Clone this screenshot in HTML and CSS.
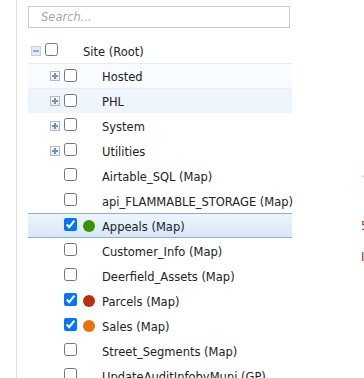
FILE: index.html
```html
<!DOCTYPE html>
<html>
<head>
<meta charset="utf-8">
<link rel="stylesheet" href="styles.css">
</head>
<body>
<div class="page">
  <div class="gutter"></div>
  <div class="panel">
    <div class="search"><input type="text" placeholder="Search..."></div>
    <div class="tree">
      <div class="row root"><span class="exp minus"></span><input type="checkbox"><span class="icon"></span><span class="label">Site (Root)</span></div>
      <div class="row lvl hover"><span class="exp plus"></span><input type="checkbox"><span class="icon"></span><span class="label">Hosted</span></div>
      <div class="row lvl alt"><span class="exp plus"></span><input type="checkbox"><span class="icon"></span><span class="label">PHL</span></div>
      <div class="row lvl"><span class="exp plus"></span><input type="checkbox"><span class="icon"></span><span class="label">System</span></div>
      <div class="row lvl"><span class="exp plus"></span><input type="checkbox"><span class="icon"></span><span class="label">Utilities</span></div>
      <div class="row lvl"><span class="exp none"></span><input type="checkbox"><span class="icon"></span><span class="label">Airtable_SQL (Map)</span></div>
      <div class="row lvl"><span class="exp none"></span><input type="checkbox"><span class="icon"></span><span class="label">api_FLAMMABLE_STORAGE (Map)</span></div>
      <div class="row lvl selected"><span class="exp none"></span><input type="checkbox" checked><span class="icon"><span class="dot green"></span></span><span class="label">Appeals (Map)</span></div>
      <div class="row lvl"><span class="exp none"></span><input type="checkbox"><span class="icon"></span><span class="label">Customer_Info (Map)</span></div>
      <div class="row lvl"><span class="exp none"></span><input type="checkbox"><span class="icon"></span><span class="label">Deerfield_Assets (Map)</span></div>
      <div class="row lvl"><span class="exp none"></span><input type="checkbox" checked><span class="icon"><span class="dot red"></span></span><span class="label">Parcels (Map)</span></div>
      <div class="row lvl"><span class="exp none"></span><input type="checkbox" checked><span class="icon"><span class="dot orange"></span></span><span class="label">Sales (Map)</span></div>
      <div class="row lvl"><span class="exp none"></span><input type="checkbox"><span class="icon"></span><span class="label">Street_Segments (Map)</span></div>
      <div class="row lvl"><span class="exp none"></span><input type="checkbox"><span class="icon"></span><span class="label">UpdateAuditInfobyMuni (GP)</span></div>
    </div>
  </div>
  <div class="side">
    <div class="frag f1">·</div>
    <div class="frag f2">5</div>
    <div class="frag f3">I</div>
  </div>
</div>
</body>
</html>
```

FILE: styles.css
```css
html, body {
  margin: 0;
  padding: 0;
  background: #fff;
}
body {
  font-family: "DejaVu Sans", Verdana, sans-serif;
  font-size: 11.5px;
  color: #222;
  overflow: hidden;
}
.page {
  display: flex;
  height: 378px;
  width: 364px;
  overflow: hidden;
}
.gutter {
  width: 16px;
  flex: none;
}
.panel {
  flex: none;
  width: 264px;
  border-left: 1px solid #dedede;
  padding: 6px 0 0 11px;
}
.search input {
  display: block;
  box-sizing: border-box;
  width: 262px;
  height: 22px;
  margin: 0;
  border: 1px solid #cccccc;
  border-radius: 0;
  padding: 0 12px;
  font-family: "DejaVu Sans", Verdana, sans-serif;
  font-size: 11.5px;
  font-style: italic;
  outline: none;
}
.search input::placeholder {
  color: #a8a8a8;
  font-style: italic;
}
.tree {
  margin-top: 10px;
  width: 264px;
}
.row {
  box-sizing: border-box;
  height: 25px;
  display: flex;
  align-items: center;
  white-space: nowrap;
}
.row.root { padding-left: 3px; }
.row.lvl { padding-left: 22px; }
.row.hover {
  background: #f8fbff;
  border-top: 1px solid #e4ecf5;
}
.row.alt {
  background: #eef5fd;
  border-top: 1px solid #e8eef6;
}
.row.selected {
  background: linear-gradient(#eef4fc, #d8e7f8);
  border-top: 1px solid #8fb1d0;
  border-bottom: 1px solid #8fb1d0;
}
.exp {
  box-sizing: border-box;
  width: 10px;
  height: 10px;
  margin-right: 4px;
  flex: none;
  position: relative;
}
.exp.none { visibility: hidden; }
.exp.plus {
  border: 1px solid #a9bad0;
  background: linear-gradient(#ffffff, #e6edf6);
}
.exp.minus {
  border: 1px solid #c3d0e0;
  background: #e2eaf4;
}
.exp.plus::before, .exp.minus::before {
  content: "";
  position: absolute;
  left: 1px;
  top: 3px;
  width: 6px;
  height: 2px;
  background: #7c8fa8;
}
.exp.minus::before { background: #9aabbf; }
.exp.plus::after {
  content: "";
  position: absolute;
  left: 3px;
  top: 1px;
  width: 2px;
  height: 6px;
  background: #7c8fa8;
}
.row input[type="checkbox"] {
  width: 13px;
  height: 13px;
  margin: 0 0 2px 0;
  flex: none;
}
.icon {
  width: 25px;
  flex: none;
  display: flex;
  align-items: center;
  height: 12px;
}
.dot {
  width: 12px;
  height: 12px;
  border-radius: 50%;
  margin-left: 6px;
  margin-top: 1px;
}
.dot.green { background: #3a9305; }
.dot.red { background: #b8300e; }
.dot.orange { background: #e8720c; }
.label {
  padding-top: 2px;
}
.side {
  flex: none;
  margin-left: 69px;
  width: 20px;
  position: relative;
  color: #8a3a12;
}
.frag {
  position: absolute;
  left: 0;
  font-size: 11.5px;
}
.f1 { top: 170px; color: #f0b070; }
.f2 { top: 219px; }
.f3 { top: 250px; }
```
